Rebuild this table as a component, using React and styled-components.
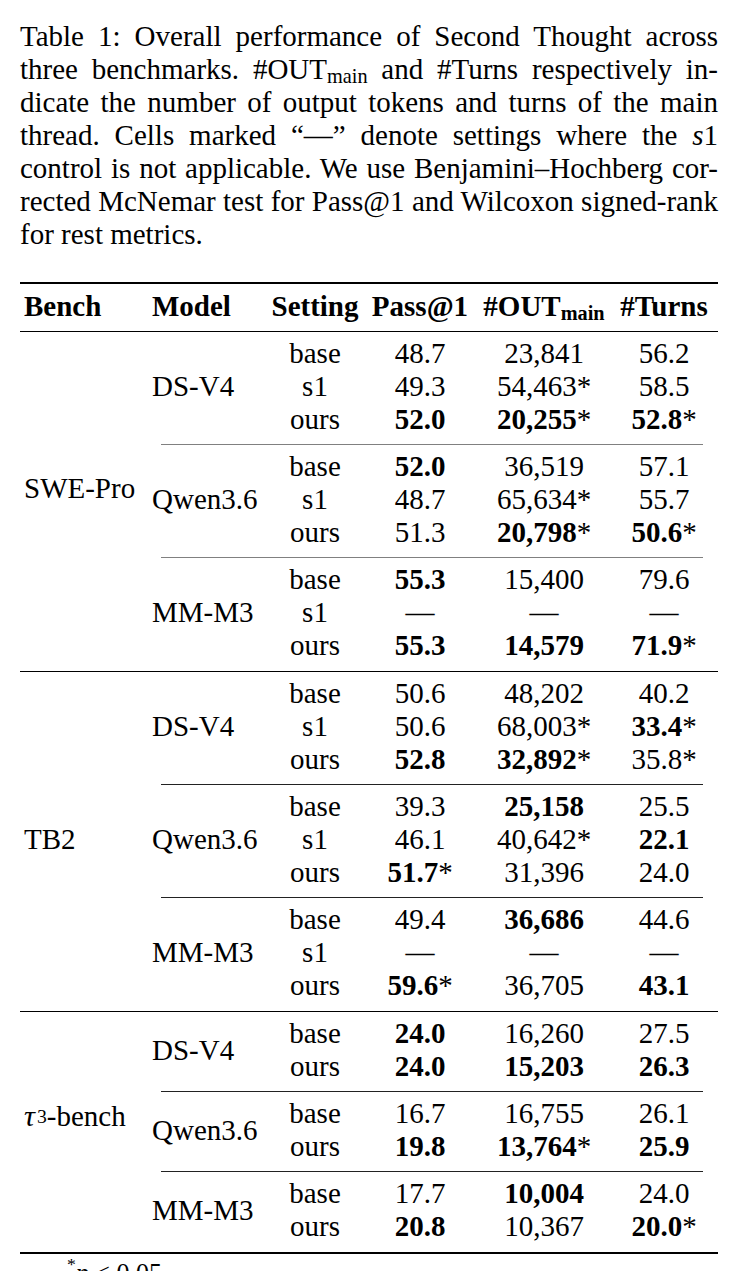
import React from "react"
import styled, { createGlobalStyle } from "styled-components"

const GlobalStyle = createGlobalStyle`
  html, body { margin: 0; padding: 0; background: #fff; overflow: hidden; }
  body {
    font-family: "Liberation Serif", "Times New Roman", Times, "DejaVu Serif", serif;
    color: #000;
  }
`

// column widths, px (table spans x=20..718)
const W = { bench: 126, model: 122, setting: 94, pass: 116, out: 132, turns: 108 }

const BENCHES = [
  {
    name: "SWE-Pro", lift: 23, tone: "#808080",
    models: [
      { name: "DS-V4", rows: [
        ["base", "48.7", "23,841", "56.2"],
        ["s1", "49.3", "54,463*", "58.5"],
        ["ours", "!52.0", "!20,255*", "!52.8*"],
      ] },
      { name: "Qwen3.6", rows: [
        ["base", "!52.0", "36,519", "57.1"],
        ["s1", "48.7", "65,634*", "55.7"],
        ["ours", "51.3", "!20,798*", "!50.6*"],
      ] },
      { name: "MM-M3", rows: [
        ["base", "!55.3", "15,400", "79.6"],
        ["s1", "—", "—", "—"],
        ["ours", "!55.3", "!14,579", "!71.9*"],
      ] },
    ],
  },
  {
    name: "TB2", lift: 0, tone: "#222",
    models: [
      { name: "DS-V4", rows: [
        ["base", "50.6", "48,202", "40.2"],
        ["s1", "50.6", "68,003*", "!33.4*"],
        ["ours", "!52.8", "!32,892*", "35.8*"],
      ] },
      { name: "Qwen3.6", rows: [
        ["base", "39.3", "!25,158", "25.5"],
        ["s1", "46.1", "40,642*", "!22.1"],
        ["ours", "!51.7*", "31,396", "24.0"],
      ] },
      { name: "MM-M3", rows: [
        ["base", "49.4", "!36,686", "44.6"],
        ["s1", "—", "—", "—"],
        ["ours", "!59.6*", "36,705", "!43.1"],
      ] },
    ],
  },
  {
    name: "tau", lift: 28, tone: "#222",
    models: [
      { name: "DS-V4", rows: [
        ["base", "!24.0", "16,260", "27.5"],
        ["ours", "!24.0", "!15,203", "!26.3"],
      ] },
      { name: "Qwen3.6", rows: [
        ["base", "16.7", "16,755", "26.1"],
        ["ours", "!19.8", "!13,764*", "!25.9"],
      ] },
      { name: "MM-M3", rows: [
        ["base", "17.7", "!10,004", "24.0"],
        ["ours", "!20.8", "10,367", "!20.0*"],
      ] },
    ],
  },
]

export default function App() {
  return (
    <Page>
      <GlobalStyle />
      <Caption>
        <CaptionLine>Table 1: Overall performance of Second Thought across</CaptionLine>
        <CaptionLine>three benchmarks. #OUT<Sub>main</Sub> and #Turns respectively in-</CaptionLine>
        <CaptionLine>dicate the number of output tokens and turns of the main</CaptionLine>
        <CaptionLine>thread. Cells marked “—” denote settings where the <i>s</i>1</CaptionLine>
        <CaptionLine $tight>control is not applicable. We use Benjamini–Hochberg cor-</CaptionLine>
        <CaptionLine $tight>rected McNemar test for Pass@1 and Wilcoxon signed-rank</CaptionLine>
        <CaptionLine $last>for rest metrics.</CaptionLine>
      </Caption>

      <Table>
        <HeadRow>
          <HeadCell $w={W.bench} $pad={4}>Bench</HeadCell>
          <HeadCell $w={W.model} $pad={6}>Model</HeadCell>
          <HeadCell $w={W.setting} $center>Setting</HeadCell>
          <HeadCell $w={W.pass} $center>Pass@1</HeadCell>
          <HeadCell $w={W.out} $center>#OUT<Sub>main</Sub></HeadCell>
          <HeadCell $w={W.turns} $center>#Turns</HeadCell>
        </HeadRow>

        {BENCHES.map((bench, bi) => (
          <BenchGroup key={bench.name} $last={bi === BENCHES.length - 1}>
            <BenchLabel $lift={bench.lift}>
              {bench.name === "tau" ? <><Tau>τ</Tau><Sup>3</Sup>-bench</> : bench.name}
            </BenchLabel>
            <ModelList>
              {bench.models.map((m, mi) => (
                <React.Fragment key={m.name}>
                  {mi > 0 && <ModelDivider $tone={bench.tone} />}
                  <ModelGroup>
                    <ModelLabel>{m.name}</ModelLabel>
                    <Rows>
                      {m.rows.map((r) => (
                        <Row key={r[0]}>
                          <Cell $w={W.setting}>{r[0]}</Cell>
                          <Cell $w={W.pass}><Value v={r[1]} /></Cell>
                          <Cell $w={W.out}><Value v={r[2]} /></Cell>
                          <Cell $w={W.turns}><Value v={r[3]} /></Cell>
                        </Row>
                      ))}
                    </Rows>
                  </ModelGroup>
                </React.Fragment>
              ))}
            </ModelList>
          </BenchGroup>
        ))}
      </Table>

      <Footnote><Sup>*</Sup><i>p</i> &lt; 0.05</Footnote>
    </Page>
  )
}

function Value({ v }) {
  const bold = v.startsWith("!")
  const raw = bold ? v.slice(1) : v
  const star = raw.endsWith("*")
  const num = star ? raw.slice(0, -1) : raw
  return (
    <>
      {bold ? <Strong>{num}</Strong> : num}
      {star && "*"}
    </>
  )
}

const Page = styled.div`
  width: 698px; height: 1271px;
  padding: 20px 18px 0 20px;
  overflow: hidden;
`

const Caption = styled.div`
  font-size: 29px; line-height: 33px;
`

const CaptionLine = styled.div`
  white-space: nowrap;
  text-align: justify;
  text-align-last: ${(p) => (p.$last ? "left" : "justify")};
  word-spacing: ${(p) => (p.$tight ? "-2px" : "0")};
`

const Sub = styled.span`
  font-size: 0.7em; line-height: 0;
  vertical-align: -0.22em;
`

const Sup = styled.span`
  font-size: 0.68em; line-height: 0;
  vertical-align: 0.62em;
  margin-left: 1px;
`

const Tau = styled.i`
  font-size: 1.05em;
  padding-right: 1px;
`

const Table = styled.div`
  margin-top: 31px;
  border-top: 2px solid #000;
  font-size: 29px; line-height: 33px;
`

const HeadRow = styled.div`
  display: flex;
  padding: 6px 0 8px;
  border-bottom: 1px solid #000;
  font-weight: bold;
`

const HeadCell = styled.div`
  width: ${(p) => p.$w}px;
  padding-left: ${(p) => p.$pad || 0}px;
  box-sizing: border-box;
  text-align: ${(p) => (p.$center ? "center" : "left")};
  white-space: nowrap;
`

const BenchGroup = styled.div`
  display: flex;
  padding: 5px 0 9px;
  border-bottom: ${(p) => (p.$last ? "2px" : "1px")} solid #000;
`

const BenchLabel = styled.div`
  width: ${W.bench}px;
  box-sizing: border-box;
  padding-left: 4px;
  padding-bottom: ${(p) => p.$lift}px;
  display: flex; align-items: center;
  white-space: nowrap;
`

const ModelList = styled.div`
  flex: 1;
  display: flex; flex-direction: column;
`

const ModelDivider = styled.div`
  margin: 8px 15px 5px;
  border-top: 1px solid ${(p) => p.$tone};
`

const ModelGroup = styled.div`
  display: flex;
`

const ModelLabel = styled.div`
  width: ${W.model}px;
  box-sizing: border-box;
  padding-left: 6px;
  display: flex; align-items: center;
  white-space: nowrap;
`

const Rows = styled.div`
  display: flex; flex-direction: column;
`

const Row = styled.div`
  display: flex;
  height: 33px;
`

const Cell = styled.div`
  width: ${(p) => p.$w}px;
  text-align: center;
  white-space: nowrap;
`

const Strong = styled.b`
  font-weight: bold;
`

const Footnote = styled.div`
  padding-left: 46px;
  margin-top: 4px;
  font-size: 26px; line-height: 30px;
`
